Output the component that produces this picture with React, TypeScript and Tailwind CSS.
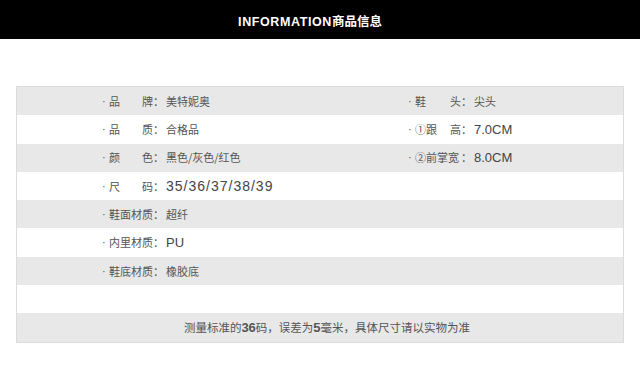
const cjk = "font-['Noto_Sans_CJK_SC',sans-serif]";
const latin = "font-['Liberation_Sans','Noto_Sans_CJK_SC',sans-serif]";

type Cell = { label: string[]; value: React.ReactNode };

const num = `${latin} text-[13px] text-[#444]`;

const rows: { left?: Cell; right?: Cell; gray: boolean }[] = [
  { left: { label: ['品', '牌'], value: '美特妮奥' }, right: { label: ['鞋', '头'], value: '尖头' }, gray: true },
  {
    left: { label: ['品', '质'], value: '合格品' },
    right: { label: ['①跟', '高'], value: <span className={num}>7.0CM</span> },
    gray: false,
  },
  {
    left: { label: ['颜', '色'], value: '黑色/灰色/红色' },
    right: { label: ['②前掌宽'], value: <span className={num}>8.0CM</span> },
    gray: true,
  },
  {
    left: {
      label: ['尺', '码'],
      value: <span className={`${latin} text-[14px] tracking-[1px] text-[#444]`}>35/36/37/38/39</span>,
    },
    gray: false,
  },
  { left: { label: ['鞋面材质'], value: '超纤' }, gray: true },
  { left: { label: ['内里材质'], value: <span className={num}>PU</span> }, gray: false },
  { left: { label: ['鞋底材质'], value: '橡胶底' }, gray: true },
  { gray: false },
];

function Item({ cell, labelW }: { cell: Cell; labelW: string }) {
  return (
    <div className="flex items-center">
      <span className={`${latin} w-[7px] text-[11px]`}>·</span>
      <span className={`${labelW} flex justify-between`}>
        {cell.label.map((p) => (
          <span key={p}>{p}</span>
        ))}
      </span>
      <span className="w-[13px]">：</span>
      <span>{cell.value}</span>
    </div>
  );
}

export default function App() {
  return (
    <div className={`w-[640px] h-[376px] bg-white ${cjk} text-[11px] text-[#555]`}>
      {/* Header */}
      <div className="h-[39px] bg-black flex items-center justify-center pt-[4px] pr-[20px]">
        <span className="text-white font-bold text-[12.5px]">
          <span className={`${latin} tracking-[0.6px]`}>INFORMATION</span>商品信息
        </span>
      </div>

      {/* Table */}
      <div className="mx-[16px] mt-[47px] border border-[#dcdcdc]">
        {rows.map((row, i) => (
          <div
            key={i}
            className={`h-[28.3px] flex items-center pl-[85px] ${row.gray ? 'bg-[#e8e8e8]' : 'bg-white'}`}
          >
            <div className="w-[306px]">{row.left && <Item cell={row.left} labelW="w-[44px]" />}</div>
            <div>{row.right && <Item cell={row.right} labelW="w-[46px]" />}</div>
          </div>
        ))}
        <div className="h-[28.3px] flex items-center justify-center pl-[14px] bg-[#e8e8e8] text-[11.5px]">
          测量标准的<span className={`${latin} text-[13px] font-bold text-[#555]`}>36</span>码，误差为
          <span className={`${latin} text-[13px] font-bold text-[#555]`}>5</span>毫米，具体尺寸请以实物为准
        </div>
      </div>
    </div>
  );
}
